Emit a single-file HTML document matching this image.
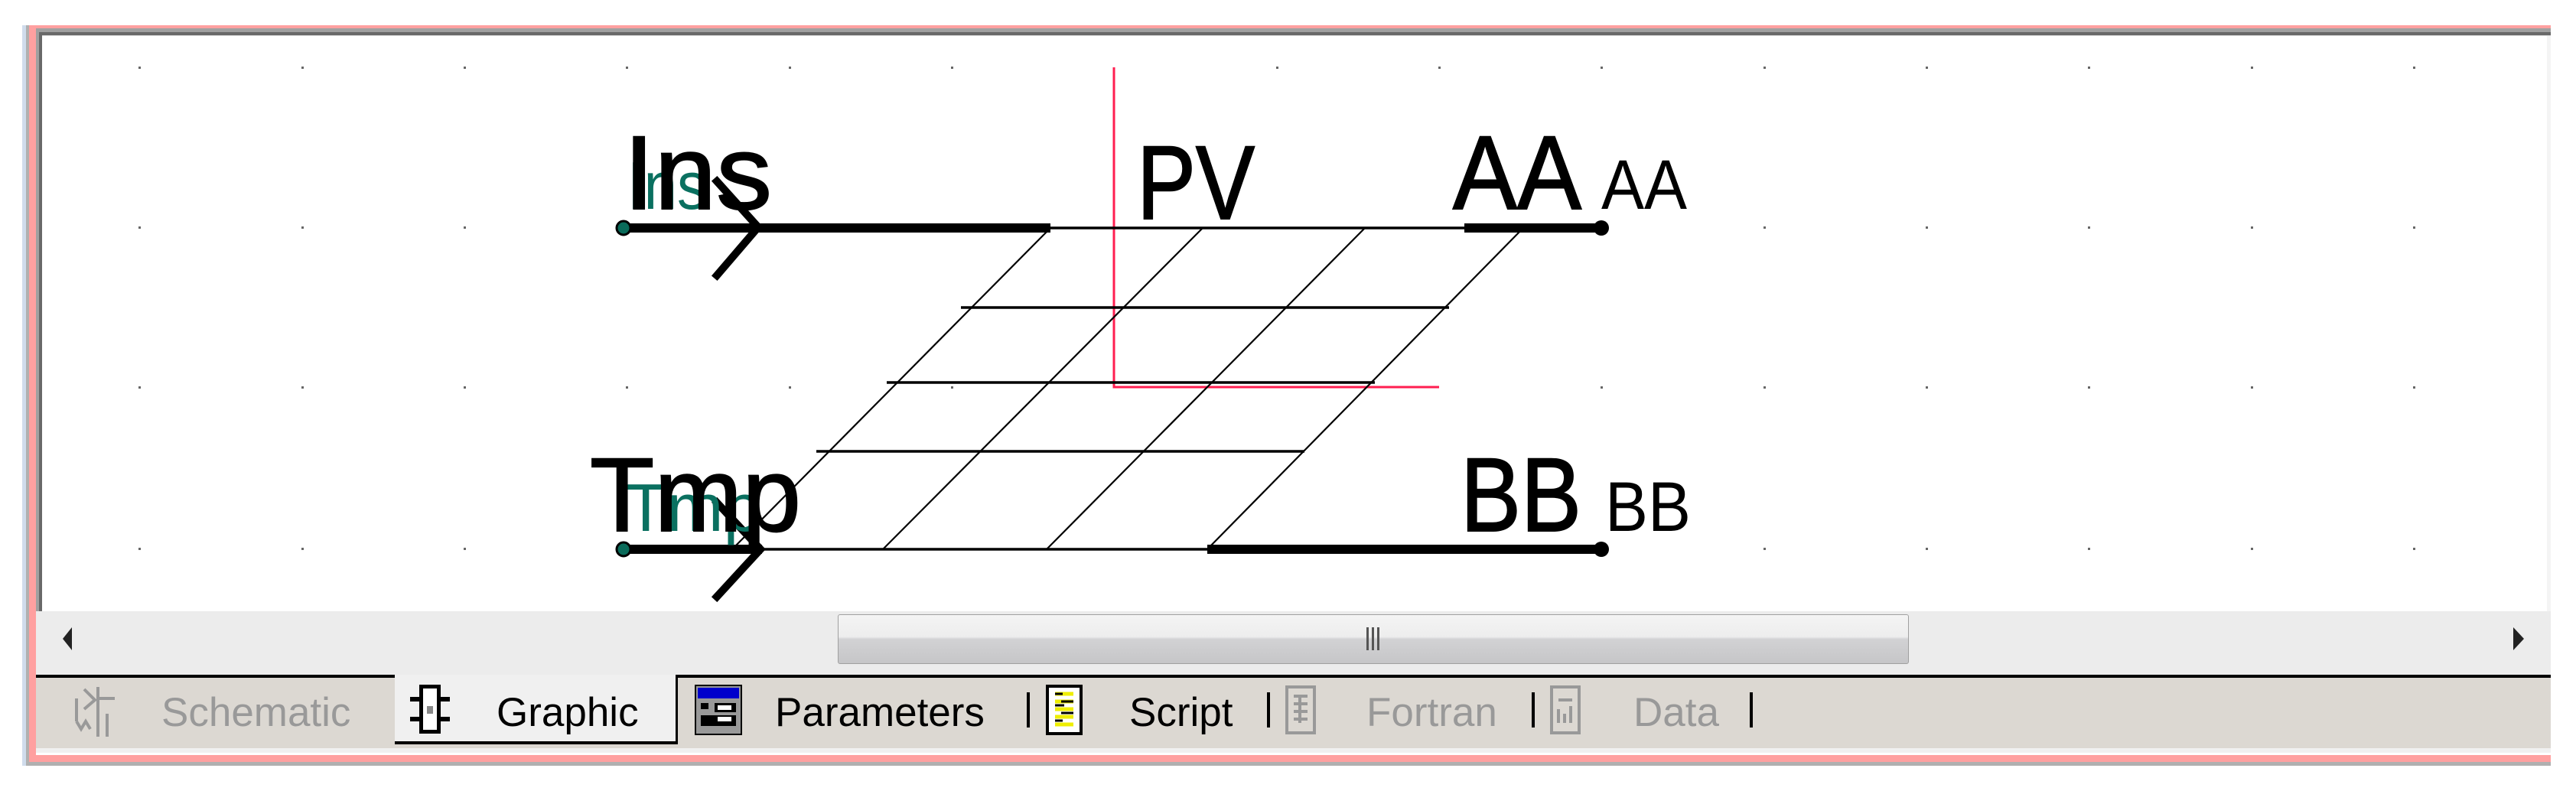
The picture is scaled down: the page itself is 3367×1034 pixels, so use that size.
<!DOCTYPE html>
<html><head><meta charset="utf-8"><style>
html,body{margin:0;padding:0;background:#fff;width:3367px;height:1034px;overflow:hidden;position:relative;font-family:"Liberation Sans",Arial,sans-serif}
.a{position:absolute}
.tab{position:absolute;top:902px;font-size:53px;line-height:60px;white-space:nowrap}
.sep{position:absolute;top:905px;width:4px;height:46px;background:#000}
</style></head><body>
<div class="a" style="left:29px;top:33px;width:5px;height:968px;background:#d0dcec"></div>
<div class="a" style="left:34px;top:33px;width:4px;height:968px;background:#b0b0b0"></div>
<div class="a" style="left:38px;top:33px;width:3296px;height:4px;background:#ffa0a0"></div>
<div class="a" style="left:38px;top:33px;width:9px;height:963px;background:#ffa0a0"></div>
<div class="a" style="left:47px;top:37px;width:3287px;height:5px;background:#a0a0a0"></div>
<div class="a" style="left:47px;top:37px;width:4px;height:762px;background:#a0a0a0"></div>
<div class="a" style="left:51px;top:42px;width:3283px;height:4px;background:#696969"></div>
<div class="a" style="left:51px;top:42px;width:4px;height:757px;background:#696969"></div>
<div class="a" style="left:55px;top:46px;width:3279px;height:1px;background:#d0d0d0"></div>
<div class="a" style="left:3329px;top:47px;width:5px;height:752px;background:#f4f4f4"></div>
<div class="a" style="left:47px;top:987px;width:3287px;height:9px;background:#ffa0a0"></div>
<div class="a" style="left:38px;top:996px;width:3296px;height:5px;background:#b0b0b0"></div>
<div class="a" style="left:47px;top:799px;width:3287px;height:83px;background:#ececec"></div>
<div class="a" style="left:1095px;top:803px;width:1398px;height:63px;border:1px solid #a0a0a0;border-radius:3px;background:linear-gradient(#f4f4f4 0%,#ededed 45%,#d2d2d4 50%,#c6c6c8 100%)"></div>
<div class="a" style="left:1786px;top:820px;width:3px;height:30px;background:#555"></div>
<div class="a" style="left:1793px;top:820px;width:3px;height:30px;background:#555"></div>
<div class="a" style="left:1800px;top:820px;width:3px;height:30px;background:#555"></div>
<svg class="a" style="left:80px;top:818px" width="16" height="34"><polygon points="14,2 2,17 14,32" fill="#222"/></svg>
<svg class="a" style="left:3283px;top:818px" width="20" height="34"><polygon points="2,2 16,17 2,32" fill="#222"/></svg>
<div class="a" style="left:47px;top:882px;width:3287px;height:4px;background:#000"></div>
<div class="a" style="left:47px;top:886px;width:3287px;height:92px;background:#dcd8d2"></div>
<div class="a" style="left:47px;top:978px;width:3287px;height:6px;background:#f0f0f0"></div>
<div class="a" style="left:516px;top:882px;width:369px;height:87px;background:#f0f0f0"></div>
<div class="a" style="left:516px;top:969px;width:369px;height:4px;background:#000"></div>
<div class="a" style="left:883px;top:882px;width:3px;height:91px;background:#000"></div>
<svg class="a" style="left:90px;top:893px" width="70" height="70" fill="none" stroke="#999" stroke-width="4"><path d="M10 20 V50 M10 50 L16 60 L22 50 L28 60 M38 5 V70 M38 20 H60 M20 8 L34 22 L20 34 M50 40 V70"/></svg>
<svg class="a" style="left:532px;top:893px" width="60" height="68"><rect x="16" y="2" width="28" height="64" fill="#000"/><rect x="21" y="7" width="18" height="54" fill="#fff"/><rect x="4" y="18" width="12" height="6" fill="#000"/><rect x="44" y="18" width="12" height="6" fill="#000"/><rect x="4" y="44" width="12" height="6" fill="#000"/><rect x="44" y="44" width="12" height="6" fill="#000"/><rect x="26" y="30" width="8" height="10" fill="#888"/></svg>
<svg class="a" style="left:908px;top:895px" width="62" height="66"><rect x="1" y="1" width="60" height="64" fill="#999" stroke="#000" stroke-width="2"/><rect x="4" y="4" width="54" height="14" fill="#0000cc"/><rect x="8" y="24" width="10" height="8" fill="#000"/><rect x="26" y="24" width="28" height="12" fill="#000"/><rect x="30" y="27" width="18" height="6" fill="#fff"/><rect x="8" y="40" width="46" height="14" fill="#000"/><rect x="30" y="42" width="18" height="6" fill="#fff"/></svg>
<div class="sep" style="left:1342px"></div>
<svg class="a" style="left:1367px;top:895px" width="50" height="66"><rect x="2" y="2" width="44" height="62" fill="#fff" stroke="#000" stroke-width="4"/><path d="M12 12 H36 M12 22 H36 M12 32 H36 M12 42 H36 M12 52 H36" stroke="#ee0" stroke-width="5"/><path d="M12 12 H22 M20 22 H36 M12 27 H24 M20 37 H36 M12 47 H22" stroke="#000" stroke-width="3"/></svg>
<div class="sep" style="left:1656px"></div>
<svg class="a" style="left:1679px;top:895px" width="44" height="66" fill="none" stroke="#999" stroke-width="4"><rect x="3" y="3" width="36" height="60"/><path d="M12 15 H30 M12 25 H30 M12 35 H30 M12 45 H30 M20 15 V50"/></svg>
<div class="tab" style="left:211px;color:#999">Schematic</div>
<div class="tab" style="left:649px;color:#000">Graphic</div>
<div class="tab" style="left:1013px;color:#000">Parameters</div>
<div class="tab" style="left:1476px;color:#000">Script</div>
<div class="tab" style="left:1786px;color:#999">Fortran</div>
<div class="sep" style="left:2002px"></div>
<svg class="a" style="left:2025px;top:895px" width="44" height="66" fill="none" stroke="#999" stroke-width="4"><rect x="3" y="3" width="36" height="60"/><path d="M12 20 H30 M12 32 V50 M20 38 V50 M28 28 V50"/></svg>
<div class="tab" style="left:2135px;color:#999">Data</div>
<div class="sep" style="left:2287px"></div>
<svg class="a" style="left:0;top:0" width="3367" height="799">
<path d="M1456 88 V506 H1881" stroke="#ff1e50" stroke-width="3" fill="none"/>
<g stroke="#000" stroke-width="2.2" fill="none">
<path d="M1373 298 L957 718 M1572 298 L1154 718 M1784 298 L1368 718 M1991 298 L1578 718"/>
</g>
<g stroke="#000" stroke-width="3.5">
<path d="M1373 298 H1914 M1256 402 H1894 M1159 500 H1797 M1067 590 H1705 M996 718 H1578"/>
</g>
<g stroke="#000" stroke-width="12" fill="none">
<path d="M812 298 H1373 M1914 298 H2093 M812 718 H996 M1578 718 H2093"/>
</g>
<g stroke="#000" stroke-width="10" fill="none" stroke-linecap="square">
<path d="M937 237 L991 297 L937 360 M937 657 L994 718 L937 780"/>
</g>
<circle cx="815" cy="298" r="9" fill="#0a6b5a" stroke="#000" stroke-width="3"/>
<circle cx="815" cy="718" r="9" fill="#0a6b5a" stroke="#000" stroke-width="3"/>
<circle cx="2093" cy="298" r="10" fill="#000"/>
<circle cx="2093" cy="718" r="10" fill="#000"/>
<g font-family="Liberation Sans, Arial, sans-serif">
<text x="820" y="273" font-size="88" fill="#0a7060" textLength="104" lengthAdjust="spacingAndGlyphs">Ins</text>
<text x="817" y="694" font-size="88" fill="#0a7060" textLength="178" lengthAdjust="spacingAndGlyphs">Tmp</text>
<text x="815" y="273" font-size="137" fill="#000" stroke="#000" stroke-width="2" textLength="194" lengthAdjust="spacingAndGlyphs">Ins</text>
<text x="1486" y="286" font-size="137" fill="#000" stroke="#000" stroke-width="2" textLength="154" lengthAdjust="spacingAndGlyphs">PV</text>
<text x="1899" y="273" font-size="137" fill="#000" stroke="#000" stroke-width="2" textLength="168" lengthAdjust="spacingAndGlyphs">AA</text>
<text x="2093" y="273" font-size="92" fill="#000" textLength="112" lengthAdjust="spacingAndGlyphs">AA</text>
<text x="771" y="694" font-size="137" fill="#000" stroke="#000" stroke-width="2" textLength="276" lengthAdjust="spacingAndGlyphs">Tmp</text>
<text x="1909" y="694" font-size="137" fill="#000" stroke="#000" stroke-width="2" textLength="158" lengthAdjust="spacingAndGlyphs">BB</text>
<text x="2098" y="694" font-size="92" fill="#000" textLength="112" lengthAdjust="spacingAndGlyphs">BB</text>
</g>
<g fill="#666">
<rect x="181" y="87" width="3" height="3"/><rect x="394" y="87" width="3" height="3"/><rect x="606" y="87" width="3" height="3"/><rect x="818" y="87" width="3" height="3"/><rect x="1031" y="87" width="3" height="3"/><rect x="1243" y="87" width="3" height="3"/><rect x="1668" y="87" width="3" height="3"/><rect x="1880" y="87" width="3" height="3"/><rect x="2092" y="87" width="3" height="3"/><rect x="2305" y="87" width="3" height="3"/><rect x="2517" y="87" width="3" height="3"/><rect x="2729" y="87" width="3" height="3"/><rect x="2942" y="87" width="3" height="3"/><rect x="3154" y="87" width="3" height="3"/>
<rect x="181" y="296" width="3" height="3"/><rect x="394" y="296" width="3" height="3"/><rect x="606" y="296" width="3" height="3"/><rect x="2305" y="296" width="3" height="3"/><rect x="2517" y="296" width="3" height="3"/><rect x="2729" y="296" width="3" height="3"/><rect x="2942" y="296" width="3" height="3"/><rect x="3154" y="296" width="3" height="3"/>
<rect x="181" y="505" width="3" height="3"/><rect x="394" y="505" width="3" height="3"/><rect x="606" y="505" width="3" height="3"/><rect x="818" y="505" width="3" height="3"/><rect x="1031" y="505" width="3" height="3"/><rect x="1243" y="505" width="3" height="3"/><rect x="2092" y="505" width="3" height="3"/><rect x="2305" y="505" width="3" height="3"/><rect x="2517" y="505" width="3" height="3"/><rect x="2729" y="505" width="3" height="3"/><rect x="2942" y="505" width="3" height="3"/><rect x="3154" y="505" width="3" height="3"/>
<rect x="181" y="716" width="3" height="3"/><rect x="394" y="716" width="3" height="3"/><rect x="606" y="716" width="3" height="3"/><rect x="2305" y="716" width="3" height="3"/><rect x="2517" y="716" width="3" height="3"/><rect x="2729" y="716" width="3" height="3"/><rect x="2942" y="716" width="3" height="3"/><rect x="3154" y="716" width="3" height="3"/>
</g>
</svg>
</body></html>
